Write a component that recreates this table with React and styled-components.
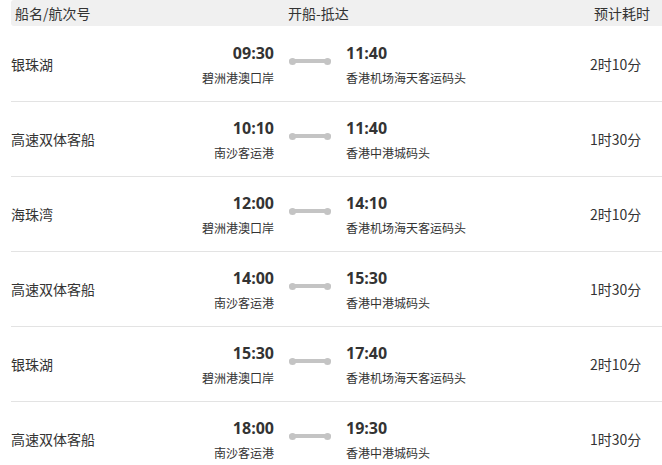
import React from "react";
import styled, { createGlobalStyle } from "styled-components";

const GlobalStyle = createGlobalStyle`
  html, body {
    margin: 0;
    padding: 0;
    background: #fff;
    overflow: hidden;
  }
  body {
    font-family: "Noto Sans CJK SC", "Open Sans", sans-serif;
    color: #333;
  }
`;

const Table = styled.div`
  margin-left: 11px;
  width: 651px;
`;

const HeaderRow = styled.div`
  display: grid;
  grid-template-columns: 273px 306px 1fr;
  align-items: center;
  height: 26px;
  margin-bottom: 1px;
  padding-left: 4px;
  background: #f0f0f0;
  border-radius: 3px 0 0 3px;
  font-size: 14px;
  line-height: 26px;
  color: #333;
`;

const HeaderCell = styled.div`
  white-space: nowrap;
`;

const Row = styled.div`
  display: grid;
  grid-template-columns: 179px 84px 72px 244px 1fr;
  align-items: center;
  height: 74px;
  border-bottom: 1px solid #e3e3e3;
`;

const Name = styled.div`
  font-size: 14px;
  line-height: 20px;
  white-space: nowrap;
`;

const Stop = styled.div`
  display: flex;
  flex-direction: column;
  align-items: ${(p) => (p.$end ? "flex-end" : "flex-start")};
  gap: 6px;
  white-space: nowrap;
`;

const Time = styled.div`
  font-family: "Open Sans", "Noto Sans CJK SC", sans-serif;
  font-weight: 700;
  font-size: 16px;
  line-height: 22px;
  color: #333;
`;

const Port = styled.div`
  font-size: 12px;
  line-height: 16px;
  color: #333;
`;

const Connector = styled.div`
  position: relative;
  justify-self: center;
  align-self: start;
  margin-top: 32px;
  width: 42px;
  height: 4px;
  border-radius: 2px;
  background: #c4c4c4;

  &::before,
  &::after {
    content: "";
    position: absolute;
    top: -1.5px;
    width: 7px;
    height: 7px;
    border-radius: 50%;
    background: #c4c4c4;
  }
  &::before {
    left: 0;
  }
  &::after {
    right: 0;
  }
`;

const Duration = styled.div`
  font-size: 14px;
  line-height: 20px;
  white-space: nowrap;
`;

const trips = [
  { name: "银珠湖", dep: "09:30", from: "碧洲港澳口岸", arr: "11:40", to: "香港机场海天客运码头", dur: "2时10分" },
  { name: "高速双体客船", dep: "10:10", from: "南沙客运港", arr: "11:40", to: "香港中港城码头", dur: "1时30分" },
  { name: "海珠湾", dep: "12:00", from: "碧洲港澳口岸", arr: "14:10", to: "香港机场海天客运码头", dur: "2时10分" },
  { name: "高速双体客船", dep: "14:00", from: "南沙客运港", arr: "15:30", to: "香港中港城码头", dur: "1时30分" },
  { name: "银珠湖", dep: "15:30", from: "碧洲港澳口岸", arr: "17:40", to: "香港机场海天客运码头", dur: "2时10分" },
  { name: "高速双体客船", dep: "18:00", from: "南沙客运港", arr: "19:30", to: "香港中港城码头", dur: "1时30分" },
];

export default function App() {
  return (
    <>
      <GlobalStyle />
      <Table>
        <HeaderRow>
          <HeaderCell>船名/航次号</HeaderCell>
          <HeaderCell>开船-抵达</HeaderCell>
          <HeaderCell>预计耗时</HeaderCell>
        </HeaderRow>
        {trips.map((t, i) => (
          <Row key={i}>
            <Name>{t.name}</Name>
            <Stop $end>
              <Time>{t.dep}</Time>
              <Port>{t.from}</Port>
            </Stop>
            <Connector />
            <Stop>
              <Time>{t.arr}</Time>
              <Port>{t.to}</Port>
            </Stop>
            <Duration>{t.dur}</Duration>
          </Row>
        ))}
      </Table>
    </>
  );
}
